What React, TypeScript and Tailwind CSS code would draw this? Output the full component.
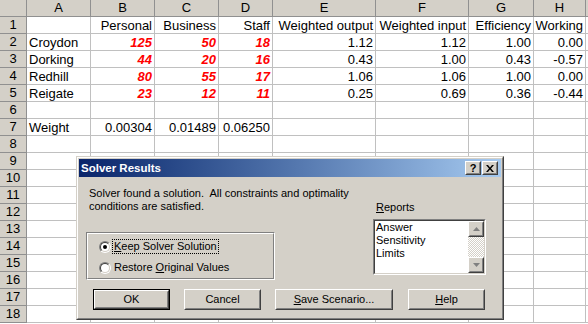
const cols = [
  "",
  "A",
  "B",
  "C",
  "D",
  "E",
  "F",
  "G",
  "H",
  "",
];

const data: string[][] = [
  ["", "Personal", "Business", "Staff", "Weighted output", "Weighted input", "Efficiency", "Working"],
  ["Croydon", "125", "50", "18", "1.12", "1.12", "1.00", "0.00"],
  ["Dorking", "44", "20", "16", "0.43", "1.00", "0.43", "-0.57"],
  ["Redhill", "80", "55", "17", "1.06", "1.06", "1.00", "0.00"],
  ["Reigate", "23", "12", "11", "0.25", "0.69", "0.36", "-0.44"],
  [],
  ["Weight", "0.00304", "0.01489", "0.06250"],
];

const sans = "font-['Liberation_Sans',Arial,sans-serif]";

function Raised({ className = "", children }: { className?: string; children?: React.ReactNode }) {
  return (
    <div className={`border border-t-white border-l-white border-r-[#404040] border-b-[#404040] ${className}`}>
      <div className="w-full h-full border border-t-[#d4d0c8] border-l-[#d4d0c8] border-r-[#808080] border-b-[#808080] flex items-center justify-center">
        {children}
      </div>
    </div>
  );
}

function Radio({ checked }: { checked?: boolean }) {
  return (
    <div className="w-[12px] h-[12px] rounded-full border border-t-[#808080] border-l-[#808080] border-r-white border-b-white shrink-0">
      <div className="w-full h-full rounded-full border border-t-[#404040] border-l-[#404040] border-r-[#d4d0c8] border-b-[#d4d0c8] bg-white flex items-center justify-center">
        {checked && <div className="w-[4px] h-[4px] rounded-full bg-black" />}
      </div>
    </div>
  );
}

function Arrow({ up }: { up?: boolean }) {
  return (
    <svg width="7" height="4" viewBox="0 0 7 4">
      {up ? <path d="M3.5 0 L7 4 L0 4 Z" fill="#808080" /> : <path d="M0 0 L7 0 L3.5 4 Z" fill="#808080" />}
    </svg>
  );
}

function Button({ children, wide, isDefault }: { children: React.ReactNode; wide?: boolean; isDefault?: boolean }) {
  const w = wide ? "w-[118px]" : "w-[77px]";
  if (isDefault) {
    return (
      <div className={`${w} h-[21px] border border-black`}>
        <Raised className="w-full h-full">{children}</Raised>
      </div>
    );
  }
  return <Raised className={`${w} h-[21px]`}>{children}</Raised>;
}

export default function App() {
  return (
    <div className={`relative w-[588px] h-[324px] overflow-hidden bg-white text-black ${sans}`}>
      {/* sheet */}
      <div className="grid grid-cols-[27px_64px_64px_64px_54px_103px_93px_65px_52px_1fr] auto-rows-[17px] text-[13px] leading-[16px]">
        {cols.map((c, i) => (
          <div
            key={"h" + i}
            className="bg-[#d4d0c8] border-r border-b border-[#909090] flex items-center justify-center"
          >
            {c}
          </div>
        ))}
        {Array.from({ length: 18 }).map((_, r) => {
          const row = data[r] || [];
          return [
            <div
              key={"r" + r}
              className="bg-[#d4d0c8] border-r border-b border-[#909090] flex items-center justify-center"
            >
              {r + 1}
            </div>,
            ...Array.from({ length: 9 }).map((_, c) => {
              const v = row[c] || "";
              const red = r >= 1 && r <= 4 && c >= 1 && c <= 3;
              const left = c === 0;
              return (
                <div
                  key={r + "-" + c}
                  className={`border-r border-b border-[#c0c0c0] flex items-center whitespace-nowrap overflow-visible pt-px ${
                    left ? "pl-[2px] justify-start" : "pr-[2px] justify-end"
                  } ${red ? "text-[#ff0000] font-bold italic" : ""}`}
                >
                  {v}
                </div>
              );
            }),
          ];
        })}
      </div>

      {/* Solver dialog */}
      <div className="absolute left-[76px] top-[156px] w-[428px] h-[164px] border border-t-[#d4d0c8] border-l-[#d4d0c8] border-r-[#404040] border-b-[#404040] text-[11px] leading-[13px]">
        <div className="w-full h-full border border-t-white border-l-white border-r-[#808080] border-b-[#808080] bg-[#d4d0c8] p-px flex flex-col">
          <div className="h-[18px] shrink-0 bg-gradient-to-r from-[#0a246a] to-[#a6caf0] flex items-center justify-between pl-[2px] pr-[3px]">
            <span className="text-white font-bold text-[11.5px]">Solver Results</span>
            <div className="flex">
              <Raised className="w-[16px] h-[14px] bg-[#d4d0c8]">
                <span className="font-bold text-[11px] leading-none">?</span>
              </Raised>
              <Raised className="w-[16px] h-[14px] bg-[#d4d0c8] ml-[1px]">
                <svg width="8" height="7" viewBox="0 0 8 7">
                  <path d="M0 0 L2 0 L4 2.5 L6 0 L8 0 L5 3.5 L8 7 L6 7 L4 4.5 L2 7 L0 7 L3 3.5 Z" fill="#000" />
                </svg>
              </Raised>
            </div>
          </div>

          <div className="flex pt-[10px]">
            <div className="w-[294px] pl-[7px] shrink-0">
              <div className="ml-[3px] whitespace-pre">
                {"Solver found a solution.  All constraints and optimality\nconditions are satisfied."}
              </div>
              <div className="mt-[19px] w-[189px] h-[48px] border border-t-[#808080] border-l-[#808080] border-r-white border-b-white">
                <div className="w-full h-full border border-t-white border-l-white border-r-[#808080] border-b-[#808080] pt-[5px] pl-[11px] flex flex-col gap-[7px]">
                  <div className="flex items-center">
                    <Radio checked />
                    <span className="ml-[1px] px-[1px] border border-dotted border-black">
                      <span className="underline">K</span>eep Solver Solution
                    </span>
                  </div>
                  <div className="flex items-center">
                    <Radio />
                    <span className="ml-[2px] px-[1px]">
                      Restore <span className="underline">O</span>riginal Values
                    </span>
                  </div>
                </div>
              </div>
            </div>

            <div className="pt-[14px]">
              <div className="pl-[3px]">
                <span className="underline">R</span>eports
              </div>
              <div className="mt-[5px] w-[113px] h-[56px] border border-t-[#808080] border-l-[#808080] border-r-white border-b-white">
                <div className="w-full h-full border border-t-[#404040] border-l-[#404040] border-r-[#d4d0c8] border-b-[#d4d0c8] bg-white flex">
                  <div className="flex-1 pl-[1px]">
                    <div>Answer</div>
                    <div>Sensitivity</div>
                    <div>Limits</div>
                  </div>
                  <div className="w-[16px] flex flex-col bg-[image:repeating-conic-gradient(#ffffff_0%_25%,#d4d0c8_0%_50%)] bg-[length:2px_2px]">
                    <Raised className="w-[16px] h-[16px] bg-[#d4d0c8]">
                      <Arrow up />
                    </Raised>
                    <div className="flex-1" />
                    <Raised className="w-[16px] h-[16px] bg-[#d4d0c8]">
                      <Arrow />
                    </Raised>
                  </div>
                </div>
              </div>
            </div>
          </div>

          <div className="flex mt-[9px] pl-[14px] gap-[14px]">
            <Button isDefault>OK</Button>
            <Button>Cancel</Button>
            <Button wide>
              <span>
                <span className="underline">S</span>ave Scenario...
              </span>
            </Button>
            <div className="ml-[1px]">
              <Button>
                <span>
                  <span className="underline">H</span>elp
                </span>
              </Button>
            </div>
          </div>
        </div>
      </div>
    </div>
  );
}
